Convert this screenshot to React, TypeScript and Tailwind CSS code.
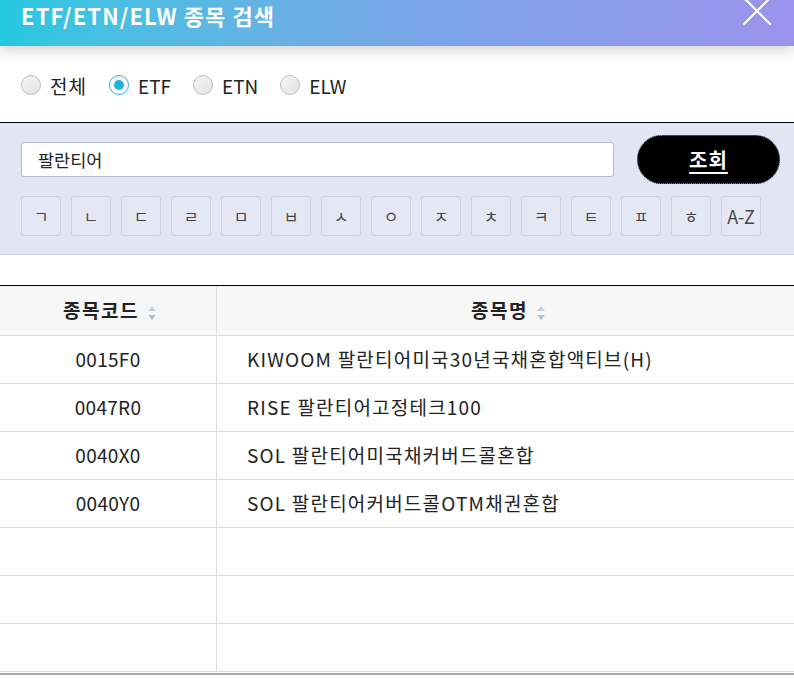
import React, { useState } from 'react';

const FONT = { fontFamily: '"Noto Sans CJK KR", "Noto Sans", sans-serif' };

const consonants = ['ㄱ', 'ㄴ', 'ㄷ', 'ㄹ', 'ㅁ', 'ㅂ', 'ㅅ', 'ㅇ', 'ㅈ', 'ㅊ', 'ㅋ', 'ㅌ', 'ㅍ', 'ㅎ', 'A-Z'];

const rows = [
  { code: '0015F0', name: 'KIWOOM 팔란티어미국30년국채혼합액티브(H)' },
  { code: '0047R0', name: 'RISE 팔란티어고정테크100' },
  { code: '0040X0', name: 'SOL 팔란티어미국채커버드콜혼합' },
  { code: '0040Y0', name: 'SOL 팔란티어커버드콜OTM채권혼합' },
  { code: '', name: '' },
  { code: '', name: '' },
  { code: '', name: '' },
];

const SortIcon = () => (
  <svg width="10" height="16" viewBox="0 0 10 16" className="ml-[8px] mt-[4px]">
    <path d="M5 1 L9 6 L1 6 Z" fill="#bcd2e2" />
    <path d="M5 15 L9 10 L1 10 Z" fill="#a8c2d6" />
  </svg>
);

const Radio: React.FC<{ label: string; checked: boolean; onClick: () => void }> = ({ label, checked, onClick }) => (
  <label className="flex items-center gap-[9px] cursor-pointer" onClick={onClick}>
    {checked ? (
      <span className="w-[20px] h-[20px] rounded-full border-[1.5px] border-[#2bb3d4] bg-white flex items-center justify-center">
        <span className="w-[10px] h-[10px] rounded-full bg-[#22b4d6]" />
      </span>
    ) : (
      <span className="w-[20px] h-[20px] rounded-full border border-[#bdbdbd] bg-gradient-to-br from-[#f6f6f6] to-[#e2e2e2]" />
    )}
    <span className={`text-[19px] text-[#222] leading-none ${label === '전체' ? 'tracking-[1px]' : ''}`}>{label}</span>
  </label>
);

export default function App() {
  const [type, setType] = useState('ETF');
  const [query, setQuery] = useState('팔란티어');

  return (
    <div className="w-[794px] h-[679px] overflow-hidden bg-white relative" style={FONT}>
      {/* header */}
      <div className="relative z-10 h-[46px] flex items-start justify-between pl-[21px] pr-[22px] bg-gradient-to-r from-[#22c8e0] via-[#7aa4e8] via-55% to-[#9b93ec] shadow-[0_4px_12px_rgba(0,0,0,0.18)]">
        <h1 className="text-white text-[22px] font-bold leading-none mt-[4px] tracking-[1.1px]">ETF/ETN/ELW 종목 검색</h1>
        <svg width="30" height="30" viewBox="0 0 30 30" className="-mt-[4px]">
          <path d="M2 2 L28 28 M28 2 L2 28" stroke="#ffffff" strokeWidth="2.2" strokeLinecap="round" />
        </svg>
      </div>

      {/* radios */}
      <div className="h-[76px] flex items-center gap-[22px] pl-[21px] pt-[2px]">
        {['전체', 'ETF', 'ETN', 'ELW'].map((t) => (
          <Radio key={t} label={t} checked={type === t} onClick={() => setType(t)} />
        ))}
      </div>

      {/* search panel */}
      <div className="border-t border-black bg-[#e1e5f4] border-b border-b-[#cfd2da] pl-[21px] pr-[14px] pt-[12px] pb-[18px]">
        <div className="flex items-center justify-between">
          <input
            value={query}
            onChange={(e) => setQuery(e.target.value)}
            className="w-[593px] h-[35px] bg-white border border-[#b9bcc6] rounded-[3px] px-[16px] text-[17.5px] text-[#222] outline-none"
          />
          <button className="w-[143px] h-[49px] rounded-full bg-black border border-dotted border-[#888] text-white text-[20px] font-bold underline underline-offset-[4px] tracking-[1px]">
            조회
          </button>
        </div>
        <div className="flex gap-[10px] mt-[12px]">
          {consonants.map((c) => (
            <button
              key={c}
              className={`w-[40px] h-[40px] rounded-[3px] border border-[#cfd3e0] bg-[#e4e7f4] flex items-center justify-center text-[#444] ${
                c === 'A-Z' ? 'text-[18px]' : 'text-[16px]'
              }`}
            >
              {c}
            </button>
          ))}
        </div>
      </div>

      {/* table */}
      <div className="mt-[30px] border-t border-black">
        <div className="flex h-[50px] bg-[#f7f7f7] border-b border-[#dcdcdc]">
          <div className="w-[217px] border-r border-[#dcdcdc] flex items-center justify-center text-[19px] font-bold text-[#222] tracking-[1.5px] pl-[4px]">
            종목코드
            <SortIcon />
          </div>
          <div className="flex-1 flex items-center justify-center text-[19px] font-bold text-[#222] tracking-[1.5px] pl-[6px]">
            종목명
            <SortIcon />
          </div>
        </div>
        {rows.map((r, i) => (
          <div key={i} className="flex h-[48px] border-b border-[#dcdcdc]">
            <div className="w-[217px] border-r border-[#dcdcdc] flex items-center justify-center text-[19px] text-[#222] tracking-[0.3px]">
              {r.code}
            </div>
            <div className="flex-1 flex items-center pl-[30px] text-[19px] text-[#222] tracking-[1.2px]">{r.name}</div>
          </div>
        ))}
        <div className="h-[2px] border-t-[2px] border-[#aaaaaa] mt-[1px]" />
      </div>
    </div>
  );
}
